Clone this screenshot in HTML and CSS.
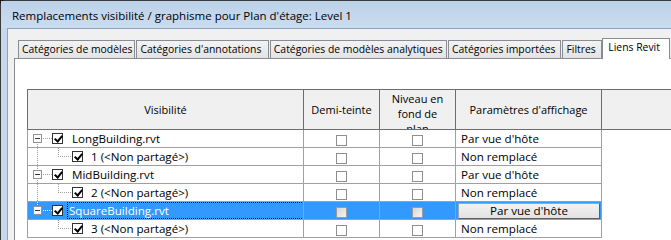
FILE: index.html
```html
<!DOCTYPE html>
<html>
<head>
<meta charset="utf-8">
<link rel="stylesheet" href="styles.css">
</head>
<body>
<div class="window">
  <div class="titlebar"><span class="title">Remplacements visibilité / graphisme pour Plan d'étage: Level 1</span></div>
  <div class="client">
    <div class="tabs">
      <div class="tab t1">Catégories de modèles</div>
      <div class="tab t2">Catégories d'annotations</div>
      <div class="tab t3">Catégories de modèles analytiques</div>
      <div class="tab t4">Catégories importées</div>
      <div class="tab t5">Filtres</div>
      <div class="tab active">Liens Revit</div>
    </div>
    <div class="panel">
      <table class="grid">
        <colgroup>
          <col class="c-vis"><col class="c-half"><col class="c-under"><col class="c-disp"><col class="c-rest">
        </colgroup>
        <thead>
          <tr>
            <th class="h-mid">Visibilité</th>
            <th class="h-mid">Demi-teinte</th>
            <th class="h-top"><div class="clip">Niveau en fond de plan</div></th>
            <th class="h-mid">Paramètres d'affichage</th>
            <th class="h-rest"></th>
          </tr>
        </thead>
        <tbody>
          <tr>
            <td class="vis">
              <div class="node">
                <svg class="lines parent" width="24" height="17" viewBox="0 0 24 17"><rect x="5.5" y="4.5" width="8" height="8" class="exp"/><line x1="7" y1="8.5" x2="12" y2="8.5" class="minus"/><line x1="15" y1="8.5" x2="24" y2="8.5" class="dot"/><line x1="9.5" y1="14" x2="9.5" y2="17" class="dot"/></svg>
                <span class="cb on"></span><span class="label">LongBuilding.rvt</span>
              </div>
            </td>
            <td class="ck"><span class="box"></span></td>
            <td class="ck"><span class="box"></span></td>
            <td class="disp">Par vue d'hôte</td>
            <td class="rest"></td>
          </tr>
          <tr>
            <td class="vis">
              <div class="node">
                <svg class="lines child" width="44" height="17" viewBox="0 0 44 17"><line x1="9.5" y1="0" x2="9.5" y2="17" class="dot"/><line x1="30.5" y1="0" x2="30.5" y2="9" class="dot"/><line x1="32" y1="8.5" x2="44" y2="8.5" class="dot"/></svg>
                <span class="cb on"></span><span class="label child-label">1 (&lt;Non partagé&gt;)</span>
              </div>
            </td>
            <td class="ck"><span class="box"></span></td>
            <td class="ck"><span class="box"></span></td>
            <td class="disp">Non remplacé</td>
            <td class="rest"></td>
          </tr>
          <tr>
            <td class="vis">
              <div class="node">
                <svg class="lines parent" width="24" height="17" viewBox="0 0 24 17"><line x1="9.5" y1="0" x2="9.5" y2="4" class="dot"/><rect x="5.5" y="4.5" width="8" height="8" class="exp"/><line x1="7" y1="8.5" x2="12" y2="8.5" class="minus"/><line x1="15" y1="8.5" x2="24" y2="8.5" class="dot"/><line x1="9.5" y1="14" x2="9.5" y2="17" class="dot"/></svg>
                <span class="cb on"></span><span class="label">MidBuilding.rvt</span>
              </div>
            </td>
            <td class="ck"><span class="box"></span></td>
            <td class="ck"><span class="box"></span></td>
            <td class="disp">Par vue d'hôte</td>
            <td class="rest"></td>
          </tr>
          <tr>
            <td class="vis">
              <div class="node">
                <svg class="lines child" width="44" height="17" viewBox="0 0 44 17"><line x1="9.5" y1="0" x2="9.5" y2="17" class="dot"/><line x1="30.5" y1="0" x2="30.5" y2="9" class="dot"/><line x1="32" y1="8.5" x2="44" y2="8.5" class="dot"/></svg>
                <span class="cb on"></span><span class="label child-label">2 (&lt;Non partagé&gt;)</span>
              </div>
            </td>
            <td class="ck"><span class="box"></span></td>
            <td class="ck"><span class="box"></span></td>
            <td class="disp">Non remplacé</td>
            <td class="rest"></td>
          </tr>
          <tr class="selected">
            <td class="vis">
              <div class="node">
                <svg class="lines parent" width="24" height="17" viewBox="0 0 24 17"><line x1="9.5" y1="0" x2="9.5" y2="4" class="dot sel"/><rect x="5.5" y="4.5" width="8" height="8" class="exp"/><line x1="7" y1="8.5" x2="12" y2="8.5" class="minus"/><line x1="15" y1="8.5" x2="24" y2="8.5" class="dot sel"/></svg>
                <span class="cb on"></span><span class="label focus">SquareBuilding.rvt</span>
              </div>
            </td>
            <td class="ck"><span class="box dis"></span></td>
            <td class="ck"><span class="box dis"></span></td>
            <td class="disp"><div class="btn">Par vue d'hôte</div></td>
            <td class="rest"></td>
          </tr>
          <tr>
            <td class="vis">
              <div class="node">
                <svg class="lines child" width="44" height="17" viewBox="0 0 44 17"><line x1="30.5" y1="0" x2="30.5" y2="9" class="dot"/><line x1="32" y1="8.5" x2="44" y2="8.5" class="dot"/></svg>
                <span class="cb on"></span><span class="label child-label">3 (&lt;Non partagé&gt;)</span>
              </div>
            </td>
            <td class="ck"><span class="box"></span></td>
            <td class="ck"><span class="box"></span></td>
            <td class="disp">Non remplacé</td>
            <td class="rest"></td>
          </tr>
        </tbody>
      </table>
    </div>
  </div>
</div>
</body>
</html>
```
FILE: styles.css
```css
html, body {
  margin: 0;
  padding: 0;
  width: 671px;
  height: 240px;
  overflow: hidden;
  background: #1b1b1b;
  font-family: "Open Sans", "Noto Sans", sans-serif;
  font-size: 11px;
  color: #000;
}

.window {
  height: 240px;
  border-top: 1px solid #3a3a3a;
  border-left: 1px solid #3a3a3a;
  border-top-left-radius: 6px;
  background: #c5d8ec;
  display: flex;
  flex-direction: column;
}

.titlebar {
  height: 27px;
  display: flex;
  align-items: center;
  padding-left: 11px;
  background: linear-gradient(#bcd2ea, #cadcef);
}

.title {
  font-size: 11.5px;
  color: #000;
  padding-top: 2px;
}

.client {
  flex: 1;
  margin-left: 6px;
  border-left: 1px solid #8fa3ba;
  border-top: 1px solid #8fa3ba;
  background: #f0f0f0;
  padding: 8px 0 0 6px;
  display: flex;
  flex-direction: column;
}

.tabs {
  display: flex;
  align-items: flex-end;
  padding-left: 4px;
  height: 21px;
  position: relative;
  z-index: 1;
}

.tab {
  box-sizing: border-box;
  height: 18px;
  padding: 0 0 0 3px;
  margin-right: 1px;
  border: 1px solid #898c95;
  border-bottom: none;
  background: linear-gradient(#f3f3f3, #e3e3e3);
  font-size: 10.4px;
  line-height: 16px;
  white-space: nowrap;
  overflow: hidden;
}

.t1 { width: 118px; }
.t2 { width: 133px; }
.t3 { width: 178px; }
.t4 { width: 114px; }
.t5 { width: 40px; }

.tab.active {
  width: 68px;
  height: 21px;
  background: #fff;
  margin-left: -1px;
  margin-bottom: -1px;
  padding: 0 0 0 5px;
  line-height: 17px;
}

.panel {
  flex: 1;
  background: #fff;
  border-left: 1px solid #898c95;
  border-top: 1px solid #898c95;
  padding: 30px 0 0 12px;
}

.grid {
  border-collapse: collapse;
  table-layout: fixed;
  width: 644px;
}

.c-vis { width: 276px; }
.c-half { width: 76px; }
.c-under { width: 76px; }
.c-disp { width: 146px; }
.c-rest { width: 70px; }

.grid th {
  height: 39px;
  padding: 0;
  font-weight: normal;
  background: #f0f0f0;
  border: 1px solid #6d6d6d;
  text-align: center;
  vertical-align: middle;
}

.grid th.h-top {
  vertical-align: top;
}

.grid th .clip {
  height: 39px;
  overflow: hidden;
  line-height: 15px;
  padding: 1px 8px 0;
  box-sizing: border-box;
}

.grid th.h-rest {
  border-right: none;
}

.grid td {
  height: 17px;
  padding: 0;
  border: 1px solid #a0a0a0;
  border-top: none;
  white-space: nowrap;
  overflow: hidden;
}

.grid td.rest {
  border: none;
}

.node {
  display: flex;
  align-items: center;
  height: 17px;
}

.lines {
  display: block;
  flex: none;
}

.exp {
  fill: #fbfbfb;
  stroke: #919191;
  stroke-width: 1;
}

.minus {
  stroke: #3a3a3a;
  stroke-width: 1;
}

.dot {
  stroke: #a0a0a0;
  stroke-width: 1;
  stroke-dasharray: 1 1;
  shape-rendering: crispEdges;
}

.dot.sel {
  stroke: #fff;
}

.cb {
  width: 11px;
  height: 11px;
  box-sizing: border-box;
  border: 1px solid #333;
  background: #fff;
  flex: none;
  position: relative;
}

.cb.on::after {
  content: "";
  position: absolute;
  left: 3px;
  top: 0px;
  width: 3px;
  height: 6px;
  border-right: 2px solid #000;
  border-bottom: 2px solid #000;
  transform: rotate(40deg);
}

.label {
  margin-left: 9px;
  font-size: 11.6px;
  line-height: 15px;
}

.child-label {
  margin-left: 8px;
}

.ck {
  text-align: center;
}

.box {
  display: inline-block;
  vertical-align: middle;
  width: 11px;
  height: 11px;
  box-sizing: border-box;
  border: 1px solid #8e8e8e;
  background: #fff;
}

.box.dis {
  border-color: #9a9a9a;
  background: linear-gradient(135deg, #d6d6d6, #f4f4f4);
}

.disp {
  padding-left: 5px !important;
  font-size: 11.6px;
}

.selected td:not(.rest) {
  background: #3399ff;
  color: #fff;
}

.focus {
  outline: 1px dotted #000;
  padding: 0 1px;
  margin-left: 5px;
  flex: 1;
}

.btn {
  height: 14px;
  margin: 0 1px 0 -3px;
  background: linear-gradient(#f2f2f2, #e2e2e2);
  border: 1px solid #a6a6a6;
  border-right-color: #5e5e5e;
  border-bottom-color: #5e5e5e;
  color: #000;
  text-align: center;
  line-height: 14px;
}
```
